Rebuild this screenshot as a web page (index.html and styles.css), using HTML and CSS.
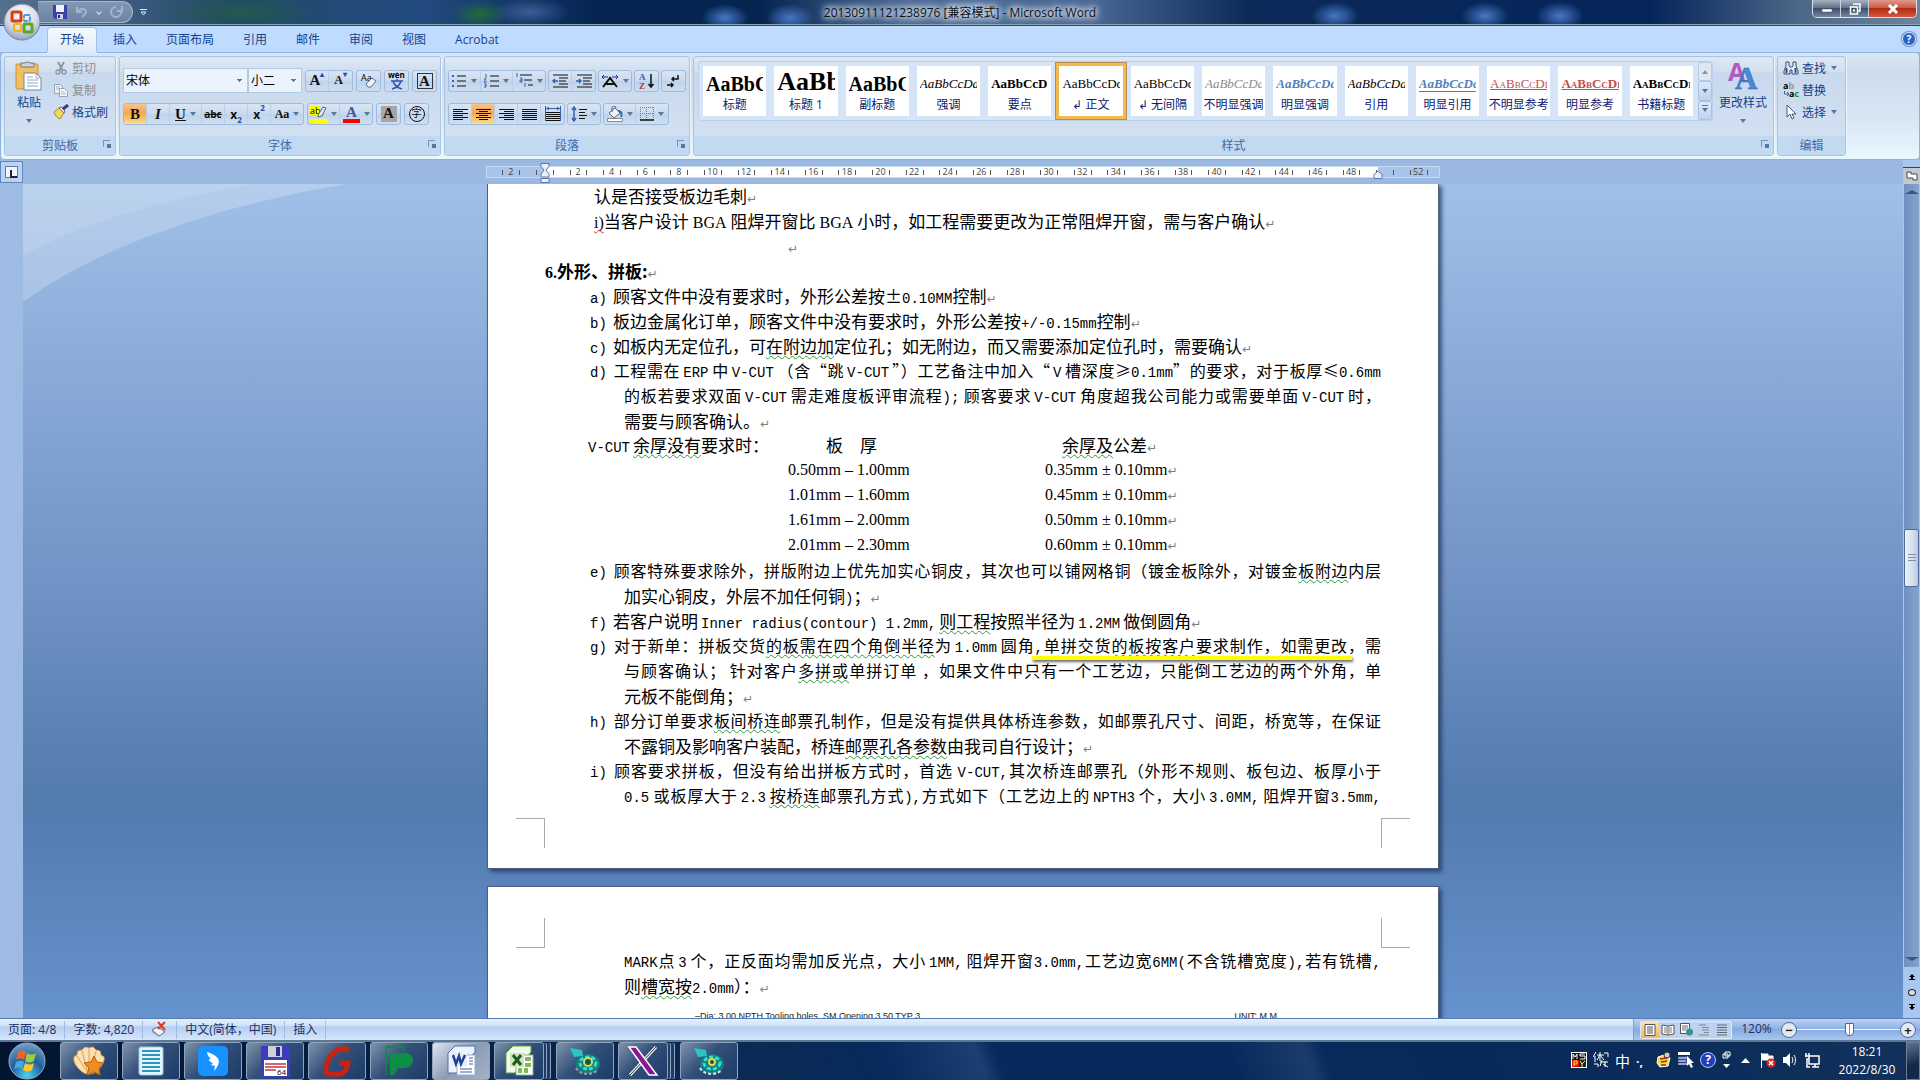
FILE: index.html
```html
<!DOCTYPE html>
<html lang="zh-CN">

<head>
    <meta charset="UTF-8">
    <meta name="viewport" content="width=device-width, initial-scale=1.0">
    <title>20130911121238976 [兼容模式] - Microsoft Word</title>
    <link rel="stylesheet" href="styles.css">
</head>

<body>
    <!-- Title bar -->
    <header class="titlebar">
        <button class="office" aria-label="Office">
            <svg width="38" height="38" viewBox="0 0 38 38">
                <defs>
                    <radialGradient id="orb" cx=".5" cy=".3" r=".75">
                        <stop offset="0" stop-color="#fff" />
                        <stop offset=".55" stop-color="#d5dae4" />
                        <stop offset="1" stop-color="#8e9bb2" />
                    </radialGradient>
                </defs>
                <circle cx="19" cy="19" r="18" fill="url(#orb)" stroke="#74839d" />
                <g fill="none" stroke-linejoin="round">
                    <rect x="9" y="9" width="9" height="9" rx="1" stroke="#d8400f" stroke-width="3" />
                    <rect x="21" y="12" width="6" height="6" rx="1" stroke="#4b9be0" stroke-width="2" stroke-dasharray="5 1" />
                    <rect x="11" y="21" width="7" height="7" rx="1" stroke="#f0b217" stroke-width="2" />
                    <rect x="21" y="21" width="8" height="8" rx="1" stroke="#5ea427" stroke-width="3" />
                </g>
            </svg>
        </button>
        <div class="quick">
            <button aria-label="保存"><svg width="14" height="14" viewBox="0 0 14 14"><path d="M0 0h14v14H2L0 12z" fill="#3f3fae" /><path d="M3 0h8v7H3z" fill="#eef1fb" /><path d="M4 9h6v5H4z" fill="#cdd3ea" /><path d="M5 10h2v3H5z" fill="#26266e" /></svg></button>
            <button aria-label="撤消"><svg width="14" height="12" viewBox="0 0 14 12"><path d="M2 1v5h5M2 6c3-4 9-4 9 0 0 2-2 3-4 5" fill="none" stroke="#a3b3ca" stroke-width="2" /></svg></button>
            <span class="chev"></span>
            <button aria-label="重复"><svg width="14" height="12" viewBox="0 0 14 12"><path d="M7 1a5 5 0 1 0 5 5M8 5h5V0" fill="none" stroke="#a3b3ca" stroke-width="2" /></svg></button>
        </div>
        <svg class="more" width="7" height="7" viewBox="0 0 7 7"><path d="M0 .5h7" stroke="#dfe7f2" /><path d="M1 3h5L3.500 6z" fill="none" stroke="#dfe7f2" /></svg>
        <h1>20130911121238976 [兼容模式] - Microsoft Word</h1>
        <div class="winbtns">
            <button aria-label="最小化"><svg width="12" height="12" viewBox="0 0 12 12"><path d="M1 6h10v3H1z" fill="#fff" stroke="#555" stroke-width=".5" /></svg></button>
            <button aria-label="还原"><svg width="12" height="12" viewBox="0 0 12 12"><path d="M4 1h7v7H9M1.500 4h7v7h-7z" fill="none" stroke="#fff" stroke-width="1.500" /><path d="M4 6.500h2v2H4z" fill="#fff" /></svg></button>
            <button class="close" aria-label="关闭"><svg width="12" height="10" viewBox="0 0 12 10"><path d="M2 1l8 8M10 1L2 9" stroke="#fff" stroke-width="3" /></svg></button>
        </div>
    </header>

    <!-- Tabs -->
    <nav class="tabs">
        <button class="active">开始</button>
        <button>插入</button>
        <button>页面布局</button>
        <button>引用</button>
        <button>邮件</button>
        <button>审阅</button>
        <button>视图</button>
        <button>Acrobat</button>
        <button class="help" aria-label="帮助">?</button>
    </nav>

    <!-- Ribbon -->
    <section class="ribbon">
        <div class="group clipboard">
            <div class="body">
                <button class="big">
                    <svg width="28" height="30" viewBox="0 0 28 30"><rect x="1" y="3" width="22" height="25" rx="1" fill="#f0bf62" stroke="#c8913a" /><path d="M6 2h4a3 2 0 0 1 5 0h4v4H6z" fill="#cfd3d8" stroke="#777" /><path d="M9 12h12l5 5v12H9z" fill="#fff" stroke="#6d86ac" /><path d="M21 12v5h5M12 16h6M12 19h11M12 22h11M12 25h11" fill="none" stroke="#90a5c4" /></svg>
                    <span>粘贴</span>
                    <i class="caret"></i>
                </button>
                <div class="stack">
                    <button class="off"><svg width="16" height="16" viewBox="0 0 16 16"><path d="M5 2l5 9M11 2L6 11" stroke="#8c99ab" stroke-width="2" /><circle cx="5" cy="12" r="2" fill="none" stroke="#8c99ab" stroke-width="1.500" /><circle cx="11" cy="12" r="2" fill="none" stroke="#8c99ab" stroke-width="1.500" /></svg>剪切</button>
                    <button class="off"><svg width="16" height="16" viewBox="0 0 16 16"><path d="M1.500 2.500h6l2 2v7h-8z" fill="#eef1f5" stroke="#97a5b8" /><path d="M6.500 6.500h5l3 3v5h-8z" fill="#f6f8fa" stroke="#97a5b8" /><path d="M8 10h4M8 12h5M3 5h4M3 7h3" stroke="#a9b5c6" /></svg>复制</button>
                    <button><svg width="16" height="16" viewBox="0 0 16 16"><path d="M1 8l5-4 5 5-4 6c-3-1-5-4-6-7z" fill="#f3d564" stroke="#a98a2a" /><path d="M6 4l2-1 4 4-1 2z" fill="#e9edf3" stroke="#67707f" /><path d="M10 5l5-4" stroke="#303f86" stroke-width="3" /></svg>格式刷</button>
                </div>
            </div>
            <div class="label">剪贴板<button class="launch" aria-label="剪贴板选项"></button></div>
        </div>

        <div class="group">
            <div class="body rows">
                <div class="row">
                    <div class="combo">
                        <select class="font" aria-label="字体"><option>宋体</option></select><select class="size" aria-label="字号"><option>小二</option></select>
                    </div>
                    <div class="set">
                        <button class="serif" aria-label="增大字体">A<sup>▴</sup></button>
                        <button class="serif small" aria-label="缩小字体">A<sup>▾</sup></button>
                    </div>
                    <div class="set"><button aria-label="清除格式"><svg width="18" height="18" viewBox="0 0 18 18"><text x="1" y="9" font-size="9" font-family="Open Sans">Aa</text><path d="M6 12l6-6 4 3-5 6H8z" fill="#eef2f8" stroke="#60708c" /></svg></button></div>
                    <div class="set"><button aria-label="拼音指南"><svg width="18" height="18" viewBox="0 0 18 18"><text x="0" y="6" font-size="8" font-family="Open Sans" font-weight="bold">wén</text><path d="M3 9h12M9 7v2M5 9c1 4 5 7 9 8M13 9c-1 4-5 7-9 8" fill="none" stroke="#2f56b8" stroke-width="1.500" /></svg></button></div>
                    <div class="set"><button aria-label="字符边框"><span class="framed serif">A</span></button></div>
                </div>
                <div class="row">
                    <div class="set">
                        <button class="on serif">B</button>
                        <button class="serif"><em>I</em></button>
                        <button class="serif dd"><u>U</u><i class="caret"></i></button>
                        <button class="strike"><s>abc</s></button>
                        <button class="script">x<sub>2</sub></button>
                        <button class="script">x<sup>2</sup></button>
                        <button class="serif dd case">Aa<i class="caret"></i></button>
                    </div>
                    <div class="set">
                        <button class="dd" aria-label="突出显示"><svg width="17" height="18" viewBox="0 0 17 18"><path d="M0 1h10v9H0z" fill="#ff0" /><text x="0" y="9" font-size="9" font-family="Open Sans">ab</text><path d="M8 10l5-8 3 1-4 8-4 1z" fill="#dfe6f0" stroke="#5a6475" /><path d="M0 14h17v4H0z" fill="#ff0" /></svg><i class="caret"></i></button>
                        <button class="dd" aria-label="字体颜色"><svg width="17" height="18" viewBox="0 0 17 18"><text x="3" y="12" font-size="15" font-weight="bold" font-family="Liberation Serif" fill="#385d9c">A</text><path d="M0 14h17v4H0z" fill="red" /></svg><i class="caret"></i></button>
                    </div>
                    <div class="set"><button aria-label="字符底纹"><span class="shaded serif">A</span></button></div>
                    <div class="set"><button aria-label="带圈字符"><span class="ringed">字</span></button></div>
                </div>
            </div>
            <div class="label">字体<button class="launch" aria-label="字体选项"></button></div>
        </div>

        <div class="group para">
            <div class="body rows">
                <div class="row">
                    <div class="set">
                        <button class="dd" aria-label="项目符号"><svg width="15" height="14" viewBox="0 0 15 14"><path d="M5 2h9M5 7h9M5 12h9" stroke="#111" /><path d="M0 1h2v2H0zM0 6h2v2H0zM0 11h2v2H0z" fill="#3a62a8" /></svg><i class="caret"></i></button>
                        <button class="dd" aria-label="编号"><svg width="15" height="14" viewBox="0 0 15 14"><path d="M6 2h9M6 7h9M6 12h9" stroke="#111" /><path d="M1 0h1v4M0 5h2l-2 3h3M0 10h2v1.500H1h1V13H0" fill="none" stroke="#3a62a8" /></svg><i class="caret"></i></button>
                        <button class="dd" aria-label="多级列表"><svg width="17" height="15" viewBox="0 0 17 15"><path d="M4 2h12M8 7h8M12 12h5" stroke="#111" /><path d="M1 0v4M4 5h2v4H4V7h2M9 10v4" fill="none" stroke="#3a62a8" /></svg><i class="caret"></i></button>
                    </div>
                    <div class="set">
                        <button aria-label="减少缩进"><svg width="16" height="14" viewBox="0 0 16 14"><path d="M1 1h15M7 4h9M7 7h7M7 10h9M1 13h15" stroke="#111" /><path d="M6 7H1M3 5L1 7l2 2" fill="none" stroke="#3a62a8" stroke-width="1.500" /></svg></button>
                        <button aria-label="增加缩进"><svg width="16" height="14" viewBox="0 0 16 14"><path d="M1 1h15M7 4h9M7 7h7M7 10h9M1 13h15" stroke="#111" /><path d="M0 7h5M3 5l2 2-2 2" fill="none" stroke="#3a62a8" stroke-width="1.500" /></svg></button>
                    </div>
                    <div class="set"><button class="dd" aria-label="中文版式"><svg width="17" height="14" viewBox="0 0 17 14"><path d="M1 13l7-9 7 9M4 10h8" fill="none" stroke="#111" stroke-width="2" /><path d="M0 3h6M2 1L0 3l2 2M16 3h-6M14 1l2 2-2 2" fill="none" stroke="#1f2f86" /></svg><i class="caret"></i></button></div>
                    <div class="set"><button aria-label="排序"><svg width="16" height="18" viewBox="0 0 16 18"><text x="0" y="8" font-size="9" font-weight="bold" font-family="Liberation Serif" fill="#3a62a8">A</text><text x="0" y="17" font-size="9" font-weight="bold" font-family="Liberation Serif" fill="#b0343c">Z</text><path d="M12 2v13M9.500 12l2.500 3 2.500-3" fill="none" stroke="#111" stroke-width="1.500" /></svg></button></div>
                    <div class="set"><button aria-label="显示编辑标记"><svg width="14" height="14" viewBox="0 0 14 14"><path d="M11 1v4H5M7 3L5 5l2 2M0 11h6M4 9l2 2-2 2" fill="none" stroke="#111" stroke-width="1.500" /></svg></button></div>
                </div>
                <div class="row">
                    <div class="set">
                        <button aria-label="左对齐"><svg width="15" height="13" viewBox="0 0 15 13"><path d="M0 1.500h15M0 3.500h10M0 5.500h15M0 7.500h10M0 9.500h15M0 11.500h10" stroke="#111" /></svg></button>
                        <button class="on" aria-label="居中"><svg width="15" height="13" viewBox="0 0 15 13"><path d="M0 1.500h15M3 3.500h9M0 5.500h15M3 7.500h9M0 9.500h15M3 11.500h9" stroke="#111" /></svg></button>
                        <button aria-label="右对齐"><svg width="15" height="13" viewBox="0 0 15 13"><path d="M0 1.500h15M5 3.500h10M0 5.500h15M5 7.500h10M0 9.500h15M5 11.500h10" stroke="#111" /></svg></button>
                        <button aria-label="两端对齐"><svg width="15" height="13" viewBox="0 0 15 13"><path d="M0 1.500h15M0 3.500h15M0 5.500h15M0 7.500h15M0 9.500h15M0 11.500h15" stroke="#111" /></svg></button>
                        <button aria-label="分散对齐"><svg width="16" height="16" viewBox="0 0 16 16"><path d="M.5 0v15M15.500 0v15M1 2.500h14M4 1L2 2.500 4 4M12 1l2 1.500L12 4" fill="none" stroke="#3a62a8" /><path d="M1 6.500h14M1 8.500h14M1 10.500h14M1 12.500h14M1 14.500h14" stroke="#111" /></svg></button>
                    </div>
                    <div class="set"><button class="dd" aria-label="行距"><svg width="16" height="16" viewBox="0 0 16 16"><path d="M3 1v14M1 4l2-3 2 3M1 12l2 3 2-3" fill="none" stroke="#3a62a8" stroke-width="1.500" /><path d="M8 3.500h8M8 6.500h6M8 9.500h8M8 12.500h6" stroke="#111" /></svg><i class="caret"></i></button></div>
                    <div class="set">
                        <button class="dd" aria-label="底纹"><svg width="16" height="16" viewBox="0 0 16 16"><path d="M2 7l6-5 5 5-6 5z" fill="#f0f3f8" stroke="#5a6475" /><path d="M11 5c4 0 4 3 3 6" fill="none" stroke="#2d6bb5" stroke-width="2" /><path d="M5 6V2a2 2 0 0 1 4 0" fill="none" stroke="#5a6475" /><path d="M.5 12.500h15v3H.5z" fill="#fff" stroke="#8a8a8a" /></svg><i class="caret"></i></button>
                        <button class="dd" aria-label="边框"><svg width="14" height="14" viewBox="0 0 14 14"><path d="M.5 0v14M6.500 0v14M13.500 0v14M0 .5h14M0 6.500h14" stroke="#6d7f9c" stroke-dasharray="1 1" /><path d="M0 13h14" stroke="#111" stroke-width="1.500" /></svg><i class="caret"></i></button>
                    </div>
                </div>
            </div>
            <div class="label">段落<button class="launch" aria-label="段落选项"></button></div>
        </div>

        <div class="group styles">
            <div class="body">
                <div class="gallery">
                    <button><b class="s20">AaBbCc</b>标题</button>
                    <button><b class="s26">AaBbC</b>标题 1</button>
                    <button><b class="s20">AaBbCc</b>副标题</button>
                    <button><span><em>AaBbCcDd</em></span>强调</button>
                    <button><b>AaBbCcD</b>要点</button>
                    <button class="picked"><span>AaBbCcDd</span>↲ 正文</button>
                    <button><span>AaBbCcDd</span>↲ 无间隔</button>
                    <button><span class="grey"><em>AaBbCcDd</em></span>不明显强调</button>
                    <button><b class="blue"><em>AaBbCcDd</em></b>明显强调</button>
                    <button><span><em>AaBbCcDd</em></span>引用</button>
                    <button><b class="blue under"><em>AaBbCcDd</em></b>明显引用</button>
                    <button><span class="red caps"><u>AaBbCcDd</u></span>不明显参考</button>
                    <button><b class="red caps"><u>AaBbCcDd</u></b>明显参考</button>
                    <button><b class="caps">AaBbCcDd</b>书籍标题</button>
                    <div class="scroller">
                        <button disabled aria-label="上一行"><i class="caret up"></i></button>
                        <button aria-label="下一行"><i class="caret"></i></button>
                        <button aria-label="其他"><i class="caret bar"></i></button>
                    </div>
                </div>
                <button class="big">
                    <svg width="30" height="30" viewBox="0 0 30 30"><text x="0" y="20" font-size="25" font-weight="bold" font-family="Open Sans" fill="#b35bc0">A</text><text x="7" y="28" font-size="31" font-weight="bold" font-family="Liberation Serif" fill="#4b8ad6" stroke="#2d5fa8" stroke-width=".5">A</text></svg>
                    <span>更改样式</span>
                    <i class="caret"></i>
                </button>
            </div>
            <div class="label">样式<button class="launch" aria-label="样式选项"></button></div>
        </div>

        <div class="group edit">
            <div class="body">
                <div class="stack">
                    <button><svg width="16" height="16" viewBox="0 0 16 16"><path d="M3 2h3v4l1 1h2l1-1V2h3v4l2 5v3H9v-4H7v4H1v-3l2-5z" fill="#e6ecf6" stroke="#324a78" /><path d="M3.500 8v5M12.500 8v5" stroke="#324a78" stroke-width="2" /></svg>查找<i class="caret"></i></button>
                    <button><svg width="16" height="16" viewBox="0 0 16 16"><text x="0" y="7" font-size="9" font-weight="bold" font-family="Open Sans">a<tspan fill="#999">b</tspan></text><text x="6" y="15" font-size="9" font-weight="bold" font-family="Open Sans">a<tspan fill="#178a22">c</tspan></text><path d="M1.500 9v3h4M4 10l2 2-2 2" fill="none" stroke="#3a62a8" /></svg>替换</button>
                    <button><svg width="16" height="16" viewBox="0 0 16 16"><path d="M4 1v12l3-3 2 5 2-1-2-4h4z" fill="#fff" stroke="#4a5a78" /></svg>选择<i class="caret"></i></button>
                </div>
            </div>
            <div class="label">编辑</div>
        </div>
    </section>

    <!-- Document -->
    <main class="work">
        <aside class="gutter"><button class="tabstop" aria-label="制表位"></button></aside>

        <div class="center">
            <div class="rulerbar">
                <div class="ruler">
                    <span>2</span><span></span><span>2</span><span>4</span><span>6</span><span>8</span><span>10</span><span>12</span><span>14</span><span>16</span><span>18</span><span>20</span><span>22</span><span>24</span><span>26</span><span>28</span><span>30</span><span>32</span><span>34</span><span>36</span><span>38</span><span>40</span><span>42</span><span>44</span><span>46</span><span>48</span><span></span><span>52</span>
                    <svg class="indent left" width="10" height="20" viewBox="0 0 10 20"><path d="M1 .5h8v3L6 7l3 4v3H1v-3l3-4-3-3.500zM1 15.500h8v4H1z" fill="#e9f0fa" stroke="#5b78a8" /></svg>
                    <svg class="indent right" width="10" height="9" viewBox="0 0 10 9"><path d="M1 8.500v-4L5 1l4 3.500v4z" fill="#e9f0fa" stroke="#5b78a8" /></svg>
                </div>
            </div>

            <div class="desk">
                <svg class="swoosh" width="480" height="130" viewBox="0 0 480 130" preserveAspectRatio="none"><path d="M0 0h325C200 20 80 60 0 118z" fill="#fff" opacity=".22" /><path d="M0 0h230C140 16 60 38 0 72z" fill="#fff" opacity=".1" /></svg>
                <article class="page">
                    <p class="in">认是否接受板边毛刺<i class="ret">↵</i></p>
                    <p class="in"><span class="tnr err">i)</span>当客户设计<span class="tnr gap">BGA</span>阻焊开窗比<span class="tnr gap">BGA</span>小时，如工程需要更改为正常阻焊开窗，需与客户确认<i class="ret">↵</i></p>
                    <p class="blank"><i class="ret">↵</i></p>
                    <h2><span class="tnr">6.</span>外形、拼板:<i class="ret">↵</i></h2>
                    <p class="item"><span class="no">a)</span>顾客文件中没有要求时，外形公差按±<span class="pn">0.10MM</span>控制<i class="ret">↵</i></p>
                    <p class="item"><span class="no">b)</span>板边金属化订单，顾客文件中没有要求时，外形公差按<span class="pn">+/-0.15mm</span>控制<i class="ret">↵</i></p>
                    <p class="item"><span class="no">c)</span>如板内无定位孔，可<u>在附边加</u>定位孔；如无附边，而又需要添加定位孔时，需要确认<i class="ret">↵</i></p>
                    <p class="item full"><span class="no">d)</span>工程需在<span class="en">ERP</span>中<span class="en">V-CUT</span>（含“跳<span class="en">V-CUT</span>”）工艺备注中加入“<span class="en">V</span>槽深度≥<span class="pn">0.1mm</span>”的要求，对于板厚≤<span class="pn">0.6mm</span></p>
                    <p class="cont full">的板若要求双面<span class="en">V-CUT</span>需走难度板评审流程<span class="pn">);</span> 顾客要求<span class="en">V-CUT</span>角度超我公司能力或需要单面<span class="en">V-CUT</span>时，</p>
                    <p class="cont">需要与顾客确认。<i class="ret">↵</i></p>
                    <table>
                        <tr><th class="first"><span class="en">V-CUT</span><u>余厚没有</u>要求时：</th><th class="thick">板　厚</th><th class="rest"><u>余厚及</u>公差<i class="ret">↵</i></th></tr>
                        <tr><td></td><td>0.50mm – 1.00mm</td><td>0.35mm ± 0.10mm<i class="ret">↵</i></td></tr>
                        <tr><td></td><td>1.01mm – 1.60mm</td><td>0.45mm ± 0.10mm<i class="ret">↵</i></td></tr>
                        <tr><td></td><td>1.61mm – 2.00mm</td><td>0.50mm ± 0.10mm<i class="ret">↵</i></td></tr>
                        <tr><td></td><td>2.01mm – 2.30mm</td><td>0.60mm ± 0.10mm<i class="ret">↵</i></td></tr>
                    </table>
                    <p class="item full"><span class="no">e)</span>顾客特殊要求除外，拼版附边上优先加实心铜皮，其次也可以铺网格铜（镀金板除外，对镀金<u>板附边</u>内层</p>
                    <p class="cont">加实心铜皮，外层不加任何铜<span class="pn">)</span>；<i class="ret">↵</i></p>
                    <p class="item"><span class="no">f)</span>若客户说明<span class="en">Inner radius(contour) 1.2mm,</span><u>则工程</u>按照半径为<span class="en">1.2MM</span>做倒圆角<i class="ret">↵</i></p>
                    <p class="item full"><span class="no">g)</span>对于新单：拼板交货<u>的板需在四个角倒半径</u>为<span class="en">1.0mm</span>圆角<mark><span class="pn">,</span>单拼交货<u>的板按客户</u>要求制作，如需更改</mark>，需</p>
                    <p class="cont full">与顾客确认； 针对客户<u>多拼或</u>单拼订单 ，如果文件中只有一个工艺边，只能倒工艺边的两个外角，单</p>
                    <p class="cont">元板不能倒角；<i class="ret">↵</i></p>
                    <p class="item full"><span class="no">h)</span>部分订单要求<u>板间桥连</u>邮票孔制作，但是没有提供具体桥连参数，如邮票孔尺寸、间距，桥宽等，在保证</p>
                    <p class="cont">不露铜及影响客户装配，桥连<u>邮票孔各参数</u>由我司自行设计；<i class="ret">↵</i></p>
                    <p class="item full"><span class="no">i)</span>顾客要求拼板，但没有给出拼板方式时，首选 <span class="pn">V-CUT,</span>其次桥连邮票孔（外形不规则、板包边、板厚小于</p>
                    <p class="cont full"><span class="pn">0.5</span> 或板厚大于<span class="en">2.3</span><u>按桥连</u>邮票孔方式<span class="pn">),</span>方式如下（工艺边上的<span class="en">NPTH3</span>个，大小<span class="en">3.0MM,</span>阻焊开窗<span class="pn">3.5mm,</span></p>
                    <div class="corners bottom"><i></i><i></i></div>
                </article>

                <article class="page next">
                    <div class="corners top"><i></i><i></i></div>
                    <p class="cont full"><span class="pn">MARK</span>点<span class="en">3</span>个，正反面均需加反光点，大小<span class="en">1MM,</span>阻焊开窗<span class="pn">3.0mm,</span>工艺边宽<span class="pn">6MM(</span>不含铣槽宽度<span class="pn">),</span>若有铣槽<span class="pn">,</span></p>
                    <p class="cont">则<u>槽宽按</u><span class="pn">2.0mm</span>）：<i class="ret">↵</i></p>
                    <div class="drawing"><span>–Dia: 3.00 NPTH Tooling holes, SM Opening 3.50 TYP 3</span><span>UNIT: M.M</span></div>
                </article>
            </div>
        </div>

        <aside class="scroll">
            <button class="split" aria-label="标尺"><svg width="12" height="11" viewBox="0 0 12 11"><path d="M1 1h4v2h6v6H7V7H1z" fill="#fff" stroke="#444" /></svg></button>
            <div class="track">
                <i class="caret up"></i>
                <div class="thumb"></div>
                <i class="caret"></i>
            </div>
            <div class="browse">
                <button aria-label="前一页"><svg width="8" height="8" viewBox="0 0 8 8"><path d="M4 0l3 3H5v2h2v1H1V5h2V3H1z" /></svg></button>
                <button class="dot" aria-label="选择浏览对象"></button>
                <button aria-label="下一页"><svg width="8" height="8" viewBox="0 0 8 8"><path d="M1 1h6v1H5v2h2L4 7 1 4h2V2H1z" /></svg></button>
            </div>
        </aside>
    </main>

    <!-- Status bar -->
    <div class="status">
        <span>页面: 4/8</span>
        <span>字数: 4,820</span>
        <span><svg width="17" height="16" viewBox="0 0 17 16"><path d="M1 9l6-3 7 5-6 4z" fill="#f2f5fa" stroke="#5a6c90" /><path d="M1 9v2l7 5v-2" fill="#8896b4" /><path d="M7 1l7 8M14 1L7 8" stroke="#e2391d" stroke-width="2" /></svg></span>
        <span>中文(简体，中国)</span>
        <span>插入</span>
        <div class="right">
            <div class="views">
                <button class="on" aria-label="页面视图"><svg width="12" height="12" viewBox="0 0 12 12"><path d="M1 .5h10v11H1z" fill="#fff" stroke="#555" /><path d="M3 3h6M3 5h6M3 7h6M3 9h6" stroke="#555" /></svg></button>
                <button aria-label="阅读版式"><svg width="14" height="12" viewBox="0 0 14 12"><path d="M1 1l6 1 6-1v9l-6 1-6-1zM7 2v9" fill="#fff" stroke="#555" /><path d="M3 4h3M3 6h3M8 4h3M8 6h3M3 8h3M8 8h3" stroke="#777" /></svg></button>
                <button aria-label="Web 版式"><svg width="13" height="13" viewBox="0 0 13 13"><path d="M.5 .5h9v10h-9z" fill="#fff" stroke="#555" /><path d="M2 3h6M2 5h6M2 7h4" stroke="#666" /><circle cx="9.500" cy="9" r="3.500" fill="#3c8f8f" /></svg></button>
                <button aria-label="大纲"><svg width="12" height="12" viewBox="0 0 12 12"><path d="M1 1h7M4 3.500h7M4 6h7M6 8.500h5M1 11h10" stroke="#7c8797" /></svg></button>
                <button aria-label="草稿"><svg width="12" height="12" viewBox="0 0 12 12"><path d="M1 1h10M1 3.500h10M1 6h10M1 8.500h10M1 11h10" stroke="#5d6675" /></svg></button>
            </div>
            <button class="percent">120%</button>
            <button class="round" aria-label="缩小">−</button>
            <input type="range" aria-label="显示比例" min="0" max="100" value="51">
            <button class="round" aria-label="放大">+</button>
        </div>
    </div>

    <!-- Taskbar -->
    <footer class="taskbar">
        <button class="start" aria-label="开始">
            <svg width="38" height="38" viewBox="0 0 38 38">
                <defs>
                    <radialGradient id="win" cx=".5" cy=".9" r=".9">
                        <stop offset="0" stop-color="#4fd2f0" />
                        <stop offset=".5" stop-color="#1d5f9c" />
                        <stop offset="1" stop-color="#7aa0c4" />
                    </radialGradient>
                </defs>
                <circle cx="19" cy="19" r="18" fill="url(#win)" stroke="#8fb3d2" />
                <path d="M10 10c3-2 6-2 8 0l-2 8c-2-2-5-2-8 0z" fill="#f0642b" />
                <path d="M19 11c3 2 6 2 9 0l-2 8c-3 2-6 2-9 0z" fill="#9ccb3b" />
                <path d="M8 20c3-2 6-2 8 0l-2 7c-2-2-5-2-8 0z" fill="#46a5e8" />
                <path d="M17 21c3 2 6 2 9 0l-2 7c-3 2-6 2-9 0z" fill="#fcc92b" />
            </svg>
        </button>
        <button class="app" aria-label="贝壳"><svg width="32" height="32" viewBox="0 0 32 32"><path d="M16 29l-5-1C5 24 0 18 1 12l3-2 1-4 4-1 3-3 4 1 4-1 3 3 4 1 1 4 3 2c1 6-4 12-10 16z" fill="#fbe0b0" stroke="#e3a85c" /><path d="M15 28L4 11M15 28L9 6M16 28V4M17 28l6-22" stroke="#e0a052" /><path d="M21 11l3 6 7 1-5 5 1 7-6-3-7 3 2-7-5-5 7-1z" fill="#ef8c22" stroke="#b75f0e" /></svg></button>
        <button class="app" aria-label="记事本"><svg width="26" height="30" viewBox="0 0 26 30"><rect x="1" y="1" width="24" height="28" rx="2" fill="#e4f6fd" stroke="#9cc7dd" /><path d="M4 5h18M4 9h18M4 13h18M4 17h18M4 21h18M4 25h18" stroke="#3295bd" stroke-width="2" /></svg></button>
        <button class="app" aria-label="钉钉"><svg width="30" height="30" viewBox="0 0 30 30"><rect width="30" height="30" rx="5" fill="#1792ff" /><path d="M9 6c7 2 11 5 12 9 0 3-2 7-5 10l1-5-4-1 2-2c-3-1-4-2-4-4h2c-2-2-4-4-4-7z" fill="#fff" /></svg></button>
        <button class="app" aria-label="磁盘工具"><svg width="31" height="33" viewBox="0 0 31 33"><path d="M1 1h27l2 3v28H1z" fill="#3c3cc0" /><path d="M8 1h14v11H8z" fill="#cfcfd6" /><path d="M16 2h4v9h-4z" fill="#2a2a90" /><path d="M4 15h23v16H4z" fill="#fff" /><path d="M5 19h21M5 22h21M5 25h11" stroke="#c23a3a" stroke-width="1.500" /><text x="17" y="30" font-size="8" font-family="Open Sans">64</text></svg></button>
        <button class="app" aria-label="Genesis"><svg width="30" height="32" viewBox="0 0 30 32"><path d="M27 4H17L9 10 4 20v7l3 2h12l5-4 2-7h-9" fill="none" stroke="#c8230f" stroke-width="5" /></svg></button>
        <button class="app" aria-label="PCB"><svg width="30" height="32" viewBox="0 0 30 32"><path d="M2 30V2h18v4" fill="none" stroke="#0d8a41" stroke-width="1.500" /><path d="M6 8h14c6 0 9 2 9 7s-4 8-9 8h-6l-4 7H6z" fill="#0f8e46" /></svg></button>
        <button class="app current" aria-label="Word"><svg width="32" height="32" viewBox="0 0 32 32"><path d="M10 1h20v6l-18 21H3V8z" fill="#eef3fb" stroke="#4a6db0" /><path d="M12 10h18v20H12z" fill="#fff" stroke="#9aabca" /><path d="M15 24h12M15 27h12M24 13h4M24 16h4M24 19h4" stroke="#3c5ea3" /><path d="M7 8h15v13H7z" fill="#e7eefb" /><path d="M8 10l3 9 3-8 2 8 4-9" fill="none" stroke="#1f4398" stroke-width="2.500" /></svg></button>
        <button class="app pile" aria-label="Excel"><svg width="32" height="32" viewBox="0 0 32 32"><path d="M10 1h18v6L12 28H3V8z" fill="#f1f8ec" stroke="#5d9d3a" /><path d="M13 10h17v20H13z" fill="#fff" stroke="#8fae82" /><path d="M15 23h4v5h-4zM21 23h4v5h-4zM22 12h6v4h-6zM22 18h6v4h-6z" fill="#7fb85f" /><path d="M7 8h14v14H7z" fill="#cfe6bd" /><path d="M10 10l8 10M18 10l-8 10" stroke="#1d5a22" stroke-width="3" /></svg></button>
        <button class="app" aria-label="CAM"><svg width="32" height="32" viewBox="0 0 32 32"><ellipse cx="19" cy="19" rx="12" ry="10" fill="#147d80" /><path d="M1 3l12 2 1 6-9 1z" fill="#2bc4c0" /><ellipse cx="19" cy="18" rx="8" ry="6" fill="none" stroke="#2fe0d0" stroke-width="3" stroke-dasharray="4 2" /><circle cx="19" cy="17" r="4" fill="#0a5b52" stroke="#e4d84a" stroke-width="2" /><path d="M7 23c4 7 15 8 22 2" fill="none" stroke="#9c9cae" stroke-width="2" stroke-dasharray="3 2" /></svg></button>
        <button class="app pile" aria-label="X"><svg width="32" height="32" viewBox="0 0 32 32"><path d="M29 2L3 30" stroke="#fff" stroke-width="3" /><path d="M29 2L3 30" stroke="#222" /><path d="M2 2h7l21 28h-8z" fill="#8c1590" stroke="#fff" stroke-width="1.500" /></svg></button>
        <button class="app" aria-label="CAM 2"><svg width="32" height="32" viewBox="0 0 32 32"><ellipse cx="19" cy="19" rx="12" ry="10" fill="#147d80" /><path d="M1 3l12 2 1 6-9 1z" fill="#2bc4c0" /><ellipse cx="19" cy="18" rx="8" ry="6" fill="none" stroke="#2fe0d0" stroke-width="3" stroke-dasharray="4 2" /><circle cx="19" cy="17" r="3" fill="#0a5b52" stroke="#e4d84a" stroke-width="2" /><path d="M7 23c4 7 15 8 22 2" fill="none" stroke="#e2e2ee" stroke-width="2" stroke-dasharray="3 2" /></svg></button>

        <div class="tray">
            <svg width="16" height="16" viewBox="0 0 16 16"><path d="M0 0h16v16H0z" fill="#fff" /><path d="M1 1h14v7H1z" fill="#111" /><path d="M1 8h7v7H1z" fill="#d11" /><path d="M8 8h7v7H8z" fill="#222" /><path d="M2 7V2l2 3 2-3v5M14 2H9v2h5v3H9" fill="none" stroke="#fff" /><path d="M3 14V9h3v3H3M9 9l2 3 3-3M11 12v3" fill="none" stroke="#fe2" /></svg>
            <svg width="16" height="16" viewBox="0 0 16 16"><path d="M3 0L0 5M2 4v6M4 3h7M7 0v9M7 3L4 8M7 3l4 5M11 1h4v4M7 10h8M9 8l-2 6M12 9v6M10 12l5 3M1 12h4v3" fill="none" stroke="#fff" /></svg>
            <span class="ime">中</span>
            <span class="punct">·,</span>
            <svg width="16" height="16" viewBox="0 0 16 16"><path d="M2 5l9-3 3 4-2 8-8 1-3-4z" fill="#f1d84a" stroke="#fff" /><path d="M4 7l7-1M5 10l6-1M5 13h5" stroke="#a52a14" stroke-width="1.500" /><circle cx="11" cy="3" r="3" fill="#ccc" stroke="#333" /></svg>
            <svg width="16" height="16" viewBox="0 0 16 16"><path d="M0 0h12v3H0z" fill="#fff" /><path d="M1 4h10v9H1z" fill="#29478f" /><path d="M0 6h9M0 9h8M0 12h10" stroke="#fff" /><path d="M9 4v10l2-2 2 4 2-1-2-4h3z" fill="#fff" /></svg>
            <span class="ask">?</span>
            <svg width="9" height="18" viewBox="0 0 9 18"><path d="M3 1h5v4H3zM1 3h5v4H1z" fill="#102a50" stroke="#fff" /><path d="M1 13h7l-3.500 4z" fill="#fff" /></svg>
            <svg class="up" width="9" height="5" viewBox="0 0 9 5"><path d="M0 5h9L4.500 0z" fill="#fff" /></svg>
            <svg width="16" height="16" viewBox="0 0 16 16"><path d="M1.500 1v15M2 2h6v2h5v6H8V8H2z" fill="#fff" stroke="#fff" /><circle cx="11" cy="11" r="4.500" fill="#dc2a22" /><path d="M9 9l4 4M13 9l-4 4" stroke="#fff" stroke-width="1.500" /></svg>
            <svg width="16" height="16" viewBox="0 0 16 16"><path d="M1 5h3l4-4v14l-4-4H1z" fill="#fff" /><path d="M10 5c1 2 1 4 0 6M12 3c2 3 2 7 0 10" fill="none" stroke="#fff" /></svg>
            <svg width="16" height="16" viewBox="0 0 16 16"><path d="M5 4h10v8H5zM8 15h7M11 12v3M2 1v4M5 1v3M1 4h4v3H3v8h3" fill="none" stroke="#fff" stroke-width="1.500" /></svg>
            <div class="clock"><time>18:21</time><time>2022/8/30</time></div>
        </div>
        <button class="desktop" aria-label="显示桌面"></button>
    </footer>
</body>

</html>
```
FILE: styles.css
```css
* {
    box-sizing: border-box;
}

body {
    margin: 0;
    height: 100vh;
    overflow: hidden;
    display: flex;
    flex-direction: column;
    font-family: "Open Sans", "Noto Sans CJK SC", sans-serif;
    font-size: 12px;
    color: #15428b;
    background: #9ebae1;
}

button,
select {
    font: inherit;
    color: inherit;
    border: none;
    background: none;
    padding: 0;
    margin: 0;
    white-space: nowrap;
}

p,
h1,
h2 {
    margin: 0;
    font-weight: normal;
}

svg {
    flex: none;
}

.caret {
    border: 3px solid transparent;
    border-top: 4px solid #56789f;
    border-bottom: none;
    flex: none;
}

.caret.up {
    border-top: none;
    border-bottom: 4px solid #56789f;
}

/* title bar */
.titlebar {
    position: relative;
    height: 25px;
    flex: none;
    display: flex;
    align-items: center;
    background:
        radial-gradient(ellipse 80px 16px at 240px 12px, #24594f, transparent),
        radial-gradient(ellipse 30px 14px at 480px 14px, #1f6b3c, transparent),
        radial-gradient(ellipse 40px 14px at 530px 12px, #3b5c97, transparent),
        radial-gradient(ellipse 24px 14px at 725px 18px, #4578c4, transparent),
        radial-gradient(ellipse 24px 14px at 790px 18px, #4578c4, transparent),
        radial-gradient(ellipse 24px 14px at 1335px 16px, #4578c4, transparent),
        radial-gradient(ellipse 24px 14px at 1485px 16px, #4578c4, transparent),
        radial-gradient(ellipse 24px 14px at 1560px 16px, #4578c4, transparent),
        linear-gradient(90deg, #55708d 0, #3d5a80 130px, #1f4a68 230px, #234b80 420px, #052450 600px, #052450 760px, #4a6894 900px, #4a6894 1090px, #0b2a58 1250px, #05245a 1650px, #4d6888 1800px, #6d849e);
    border-bottom: 1px solid #8ba7b5;
}

.titlebar h1 {
    position: absolute;
    left: 0;
    right: 0;
    text-align: center;
    font-size: 12px;
    line-height: 24px;
    padding-top: 2px;
    color: #111;
    text-shadow: 0 0 5px #d5e0ee, 0 0 6px #d5e0ee, 0 0 8px #c5d3e6, 0 0 10px #c5d3e6, 0 0 12px #b5c6de;
    pointer-events: none;
}

.office {
    position: absolute;
    left: 3px;
    top: 3px;
    z-index: 2;
}

.quick {
    margin-left: 38px;
    width: 95px;
    height: 22px;
    padding-left: 15px;
    display: flex;
    align-items: center;
    gap: 8px;
    border: 1px solid #a3b5cb;
    border-left: none;
    border-radius: 0 11px 11px 0;
    background: linear-gradient(#8197b3, #6b84a5);
}

.quick button {
    display: flex;
}

.chev {
    width: 4px;
    height: 4px;
    border: 1px solid #dfe7f2;
    border-width: 0 1px 1px 0;
    transform: rotate(45deg);
}

.more {
    margin-left: 7px;
}

.winbtns {
    margin-left: auto;
    margin-right: 3px;
    align-self: flex-start;
    height: 18px;
    display: flex;
    border: 1px solid #dbe3ec;
    border-top: none;
    border-radius: 0 0 5px 5px;
    overflow: hidden;
}

.winbtns button {
    width: 28px;
    display: flex;
    align-items: center;
    justify-content: center;
    background: linear-gradient(#a7b3c2, #5a6b82 50%, #3d506b 50%, #7286a0);
    border-right: 1px solid #c8d2de;
}

.winbtns .close {
    width: 47px;
    border: none;
    background: linear-gradient(#dc9a8c, #c8553e 50%, #b32b12 50%, #d4593a);
}

/* tabs */
.tabs {
    height: 27px;
    flex: none;
    display: flex;
    align-items: flex-end;
    gap: 3px;
    padding-left: 47px;
    padding-right: 4px;
    background: #bfdbff;
    border-top: 1px solid #2c4458;
}

.tabs button {
    height: 25px;
    padding: 0 12px 2px;
    border: 1px solid transparent;
    border-bottom: none;
}

.tabs .active {
    background: linear-gradient(#f5fafe, #e1ecf9);
    border-color: #9cc4e8;
    border-radius: 4px 4px 0 0;
    box-shadow: 0 1px 0 #e1ecf9;
    position: relative;
}

.tabs .help {
    margin-left: auto;
    align-self: center;
    width: 14px;
    height: 14px;
    padding: 0;
    border: 1px solid #e3eefc;
    border-radius: 50%;
    background: #2a62c9;
    color: #fff;
    font-weight: bold;
    font-size: 10px;
    line-height: 12px;
    box-shadow: 0 0 1px 1px #6b8fc4;
}

/* ribbon */
.ribbon {
    height: 108px;
    flex: none;
    display: flex;
    gap: 3px;
    padding: 3px;
    border: 1px solid #8db2e3;
    border-radius: 4px;
    background: linear-gradient(#dbe7f4, #cddcee 16%, #d8e5f3 60%, #e6f8fe);
}

.group {
    flex: none;
    display: flex;
    flex-direction: column;
    border: 1px solid #a9c4e0;
    border-radius: 3px;
    background: linear-gradient(#dee8f5, #d1dfef 15%, #c8d9ee 16%, #d5e3f2);
    box-shadow: 1px 1px 0 #eef6fd;
}

.group .body {
    flex: 1;
    display: flex;
}

.group .label {
    position: relative;
    height: 19px;
    line-height: 19px;
    text-align: center;
    background: #c1d9f1;
    color: #3e6aaa;
}

.launch {
    position: absolute;
    right: 5px;
    top: 4px;
    width: 7px;
    height: 7px;
    border: 1px solid #7592b8;
    border-width: 1px 0 0 1px;
}

.launch::after {
    content: "";
    position: absolute;
    left: 3px;
    top: 3px;
    width: 4px;
    height: 4px;
    background: #56789f;
}

.big {
    width: 48px;
    display: flex;
    flex-direction: column;
    align-items: center;
    padding-top: 4px;
}

.big span {
    line-height: 24px;
}

.big .caret {
    margin-top: 4px;
}

.stack {
    display: flex;
    flex-direction: column;
}

.stack button {
    height: 22px;
    display: flex;
    align-items: center;
    gap: 3px;
}

.stack .off {
    color: #8d8d8d;
}

.clipboard {
    width: 112px;
}

.rows {
    flex-direction: column;
    gap: 10px;
    padding: 11px 3px 0;
}

.row {
    display: flex;
    align-items: center;
    gap: 3px;
}

.row:first-child {
    height: 25px;
}

.para {
    width: 246px;
}

.para .row {
    gap: 2px;
}

.combo {
    display: flex;
    height: 25px;
}

.combo select {
    appearance: none;
    padding-left: 2px;
    color: #000;
    border: 1px solid #b4cae4;
    background: linear-gradient(#56789f, #56789f) no-repeat right 5px top 10px / 5px 1px,
        linear-gradient(#56789f, #56789f) no-repeat right 6px top 11px / 3px 1px,
        linear-gradient(#56789f, #56789f) no-repeat right 7px top 12px / 1px 1px, #eaf2fb;
}

.combo .font {
    width: 125px;
}

.combo .size {
    width: 54px;
}

.set {
    display: flex;
    height: 22px;
    border: 1px solid #9ebbdd;
    border-radius: 3px;
    background: linear-gradient(#d9e5f4, #c9daee 50%, #bfd2ea 50%, #cfdff1);
}

.set button {
    width: 23px;
    display: flex;
    align-items: center;
    justify-content: center;
    color: #111;
    border-right: 1px solid #b9cee7;
}

.set button:last-child {
    border-right: none;
}

.set .dd {
    width: 32px;
    gap: 4px;
}

.set .on {
    background: linear-gradient(#f5c491, #f7a54b 45%, #fbdf8c);
}

.serif {
    font-family: "Liberation Serif", serif;
    font-weight: bold;
    font-size: 15px;
}

.set .small,
.set .case {
    font-size: 12px;
}

.set sup,
.set sub {
    font-size: 8px;
    color: #2d4a9c;
    line-height: 8px;
}

.set sup {
    align-self: flex-start;
}

.set sub {
    align-self: flex-end;
}

.set .strike {
    font-size: 10px;
    font-weight: bold;
}

.set .script {
    font-weight: bold;
}

.framed,
.shaded {
    width: 16px;
    height: 16px;
    line-height: 15px;
    border: 1px solid #333;
}

.shaded {
    border: none;
    background: #a6a6a6;
}

.ringed {
    width: 16px;
    height: 16px;
    border: 1px solid #111;
    border-radius: 50%;
    font-size: 10px;
    line-height: 13px;
}

.group.styles {
    flex: 1;
    min-width: 0;
}

.styles .body {
    padding: 4px;
}

.gallery {
    flex: 1;
    min-width: 0;
    height: 60px;
    display: flex;
    gap: 8px;
    padding-left: 4px;
    align-items: center;
    border: 1px solid #b9d0ed;
    border-radius: 3px;
    background: #d5e5f7;
}

.gallery > button {
    flex: 1;
    min-width: 0;
    height: 50px;
    background: #fff;
    color: #10206e;
    line-height: 18px;
    position: relative;
}

.gallery > button > :first-child {
    display: block;
    margin: 0 3px;
    height: 28px;
    line-height: 32px;
    overflow: hidden;
    text-align: left;
    font-family: "Liberation Serif", serif;
    font-size: 13px;
    color: #000;
}

.gallery > button > .s20 {
    font-size: 20px;
}

.gallery > button > .s26 {
    font-size: 26px;
    line-height: 28px;
}

.gallery > button > .grey {
    color: #8a8a8a;
}

.gallery > button > .blue {
    color: #4f81bd;
}

.gallery > button > .red {
    color: #c0504d;
}

.gallery > button > .caps {
    font-variant: small-caps;
}

.gallery > button > .under {
    height: 24px;
    margin-bottom: 4px;
    border-bottom: 1px solid #4f81bd;
}

.gallery .picked {
    outline: 3px solid #f2ba4d;
    box-shadow: 0 0 0 4px #b48c5a;
}

.scroller {
    align-self: stretch;
    width: 14px;
    margin-left: -3px;
    display: flex;
    flex-direction: column;
}

.scroller button {
    flex: 1;
    display: flex;
    align-items: center;
    justify-content: center;
    border: 1px solid #a9c3e4;
    border-radius: 2px;
    background: linear-gradient(#dce8f7, #bdd3ee);
}

.scroller button:disabled {
    background: #e4e8ed;
    opacity: .7;
}

.caret.bar {
    position: relative;
}

.caret.bar::before {
    content: "";
    position: absolute;
    left: -3px;
    top: -7px;
    width: 6px;
    height: 1px;
    background: #56789f;
}

.styles .big {
    width: 60px;
    flex: none;
    padding-top: 0;
    margin-right: -4px;
}

.edit {
    width: 69px;
    margin-right: 70px;
}

.edit .stack {
    padding-left: 5px;
}

.edit .caret {
    margin-left: 2px;
}

/* work area */
.work {
    flex: 1;
    min-height: 0;
    display: flex;
}

.gutter {
    width: 23px;
    background: #9dbbe3;
}

.tabstop {
    position: relative;
    width: 23px;
    height: 22px;
    margin-top: 1px;
    border: 1px solid #5f86c4;
    background: #bcd2f0;
}

.tabstop::before {
    content: "";
    position: absolute;
    inset: 4px;
    border: 1px solid #5b78a8;
    background: #f0f5fc;
}

.tabstop::after {
    content: "";
    position: absolute;
    left: 9px;
    top: 8px;
    width: 5px;
    height: 6px;
    border: 2px solid #223;
    border-width: 0 0 2px 2px;
}

.center {
    flex: 1;
    display: flex;
    flex-direction: column;
    min-width: 0;
}

.rulerbar {
    height: 24px;
    flex: none;
    padding-top: 6px;
    background: #9bb8e0;
}

.ruler {
    position: relative;
    width: 954px;
    height: 12px;
    margin: 0 auto;
    padding: 0 4px 0 7px;
    display: flex;
    border: 1px solid #c6daf2;
    background: linear-gradient(#fff, #fff) no-repeat 58px 0 / 833px 12px, #a9c4ea;
    font-size: 9px;
    line-height: 10px;
    color: #444;
}

.ruler span {
    flex: 1;
    position: relative;
    display: flex;
    align-items: center;
    justify-content: center;
}

.ruler span::before,
.ruler span::after {
    content: "";
    position: absolute;
    left: 25%;
    top: 3px;
    height: 5px;
    border-left: 1px solid #555;
}

.ruler span::after {
    left: 75%;
}

.indent {
    position: absolute;
    top: -4px;
    left: 53px;
}

.indent.right {
    top: 3px;
    left: 886px;
}

.desk {
    position: relative;
    flex: 1;
    min-height: 0;
    overflow: hidden;
    background: linear-gradient(#a0c0e8, #7294c6 47%, #527bae 74%, #6692ce);
}

.swoosh {
    position: absolute;
    left: 0;
    top: 0;
}

.page {
    position: relative;
    width: 952px;
    height: 686px;
    margin: -1px auto 0;
    padding: 0 57px;
    background: #fff;
    border: 1px solid #4d5f7c;
    border-top: none;
    box-shadow: 3px 3px 4px rgba(30, 50, 90, .7);
    color: #000;
    font-family: "Noto Sans CJK SC", sans-serif;
    font-size: 17px;
    line-height: 25px;
}

.page.next {
    margin-top: 17px;
    padding-top: 61px;
    border-top: 1px solid #4d5f7c;
}

.page p,
.page h2 {
    height: 25px;
    white-space: nowrap;
    font-size: 17px;
}

.page h2 {
    font-weight: bold;
}

.page .in {
    padding-left: 49px;
}

.page .blank {
    padding-left: 243px;
}

.page .item {
    padding-left: 45px;
}

.page .cont {
    padding-left: 79px;
}

.page .full {
    font-size: 16px;
    text-align: justify;
    text-align-last: justify;
}

.no,
.en,
.pn {
    font-family: "Liberation Mono", monospace;
    font-size: 14px;
    line-height: 0;
}

.en {
    margin: 0 3px;
}

.no {
    display: inline-block;
    width: 23px;
    text-align: left;
    text-align-last: left;
}

.tnr {
    font-family: "Liberation Serif", serif;
    font-size: 16px;
    line-height: 0;
}

.gap {
    margin: 0 4px;
}

.page u {
    text-decoration: underline wavy #2b9a3a 1px;
    text-underline-offset: 2px;
    text-decoration-skip-ink: none;
}

.err {
    text-decoration: underline wavy #d33 1px;
    text-decoration-skip-ink: none;
}

.ret {
    font: 12px/0 "DejaVu Sans", sans-serif;
    color: #808080;
}

mark {
    position: relative;
    background: none;
    color: inherit;
}

mark::after {
    content: "";
    position: absolute;
    left: -3px;
    right: -4px;
    bottom: -3px;
    height: 4px;
    background: #ff0;
    box-shadow: 1px 2px 3px rgba(0, 0, 0, .6);
}

table {
    margin-left: 43px;
    border-collapse: collapse;
}

tr {
    height: 25px;
}

th,
td {
    height: 25px;
    padding: 0;
    line-height: 24px;
    vertical-align: top;
    text-align: left;
    white-space: nowrap;
    font-weight: normal;
}

td {
    font-family: "Liberation Serif", serif;
    font-size: 16px;
}

.first {
    width: 200px;
}

.first .en {
    margin-left: 0;
}

.thick {
    width: 257px;
    padding-left: 38px;
}

.rest {
    padding-left: 17px;
}

.corners {
    position: absolute;
    left: 28px;
    right: 28px;
    display: flex;
    justify-content: space-between;
}

.corners.bottom {
    bottom: 20px;
}

.corners.top {
    top: 31px;
}

.corners i {
    width: 29px;
    height: 30px;
    border: 0 solid #aaa;
}

.bottom i:first-child {
    border-width: 1px 1px 0 0;
}

.bottom i:last-child {
    border-width: 1px 0 0 1px;
}

.top i:first-child {
    border-width: 0 1px 1px 0;
}

.top i:last-child {
    border-width: 0 0 1px 1px;
}

.drawing {
    display: flex;
    justify-content: space-between;
    padding: 12px 104px 0 150px;
    font: 9px/12px "Liberation Sans", sans-serif;
    color: #222;
}

/* scroll bar */
.scroll {
    width: 17px;
    display: flex;
    flex-direction: column;
    background: #a9c6ee;
}

.split {
    height: 17px;
    margin-top: 7px;
    display: flex;
    align-items: center;
    justify-content: center;
    background: #c3c7cf;
    border-top: 1px solid #2c4470;
}

.track {
    flex: 1;
    margin: 0 1px;
    display: flex;
    flex-direction: column;
    align-items: center;
    justify-content: space-between;
    padding: 6px 0;
    background: linear-gradient(90deg, #6f90c0, #86a3cb);
}

.track .caret {
    border-width: 4px 7px;
    border-top-color: #3a5588;
}

.track .caret.up {
    border-bottom-color: #3a5588;
}

.thumb {
    width: 15px;
    height: 58px;
    margin-bottom: 36px;
    border: 1px solid #4e6a9c;
    border-radius: 2px;
    background: repeating-linear-gradient(#7d90ab 0 1px, transparent 1px 3px) no-repeat center / 8px 8px,
        linear-gradient(90deg, #edf3f8, #d4dfeb 60%, #b7c9de);
}

.browse {
    height: 51px;
    display: flex;
    flex-direction: column;
    align-items: center;
    justify-content: space-evenly;
}

.browse button {
    display: flex;
}

.browse .dot {
    width: 8px;
    height: 7px;
    border: 1px solid #222;
    border-radius: 50%;
    background: #ddd;
}

/* status bar */
.status {
    height: 22px;
    flex: none;
    display: flex;
    align-items: center;
    border-top: 1px solid #567db1;
    background: linear-gradient(#e3f0fe, #cfe1f7 35%, #b3cdf0 36%, #d6e6fb);
    color: #1b2f63;
}

.status > span {
    height: 18px;
    padding: 0 8px 2px;
    display: flex;
    align-items: center;
    border-right: 1px solid #9fbce2;
}

.status .right {
    margin-left: auto;
    height: 21px;
    width: 287px;
    padding: 0 4px 0 6px;
    display: flex;
    align-items: center;
    border-left: 1px solid #7f9fd0;
    background: linear-gradient(#bcd3f3, #8fb2e4 45%, #83a9e0 46%, #a9c6ee);
}

.views {
    display: flex;
    height: 18px;
    border: 1px solid #e0ecfb;
    border-radius: 2px;
    background: #bdd2ee;
}

.views button {
    width: 18px;
    display: flex;
    align-items: center;
    justify-content: center;
}

.views .on {
    background: linear-gradient(#fbe0b1, #f9b65a);
}

.percent {
    width: 49px;
    padding-bottom: 2px;
}

.round {
    width: 16px;
    height: 16px;
    border: 1px solid #55698c;
    border-radius: 50%;
    background: #e2e9f3;
    color: #222;
    font-weight: bold;
    font-size: 13px;
    line-height: 12px;
}

.right input {
    appearance: none;
    flex: 1;
    min-width: 0;
    height: 16px;
    margin: 0;
    background: linear-gradient(#f4f8fd, #f4f8fd) no-repeat center / 100% 1px;
}

.right input::-webkit-slider-thumb {
    appearance: none;
    width: 9px;
    height: 13px;
    border: 1px solid #55698c;
    border-radius: 1px 1px 5px 5px;
    background: linear-gradient(90deg, #fff 40%, #8393ad 40% 60%, #fff 60%);
}

/* taskbar */
.taskbar {
    height: 40px;
    flex: none;
    display: flex;
    align-items: center;
    gap: 4px;
    border-top: 2px solid #5c7895;
    color: #fff;
    background: linear-gradient(70deg, #03142f, #0b2a55 40%, #072a5c 46%, #1a3f70 51%, #072a5c 52%, #06295c 64%, #1b3c6a 68%, #072a5c 69%, #082a5a 78%, #12315a);
}

.start {
    width: 56px;
    display: flex;
    padding-left: 8px;
}

.app {
    width: 58px;
    height: 38px;
    display: flex;
    align-items: center;
    justify-content: center;
    border: 1px solid #8ea3bd;
    border-radius: 3px;
    background: linear-gradient(135deg, #7f93ab, #33507a 45%, #1c3b68);
}

.app.current {
    background: linear-gradient(135deg, #dfe6ee, #8b9cb5 50%, #a4b2c6);
}

.app.pile {
    width: 50px;
    margin-right: 8px;
    box-shadow: 3px 0 0 -1px #1c3b68, 4px 0 0 -1px #8ea3bd, 7px 0 0 -1px #1c3b68, 8px 0 0 -1px #8ea3bd;
}

.tray {
    margin-left: auto;
    display: flex;
    align-items: center;
    gap: 6px;
}

.tray svg,
.ime,
.ask {
    margin-bottom: 2px;
}

.tray .up {
    margin-left: 4px;
    margin-right: 4px;
}

.ime {
    font-size: 15px;
}

.punct {
    width: 14px;
    font-weight: bold;
}

.ask {
    width: 16px;
    height: 16px;
    border: 1px solid #b9c8f0;
    border-radius: 50%;
    background: #1f3fc0;
    font-weight: bold;
    line-height: 14px;
    text-align: center;
}

.clock {
    width: 70px;
    margin-left: 6px;
    display: flex;
    flex-direction: column;
    align-items: center;
    line-height: 18px;
}

.desktop {
    width: 14px;
    height: 38px;
    border: 1px solid #6b7f99;
    background: linear-gradient(160deg, #5f738e, #14294a 60%);
}
```
